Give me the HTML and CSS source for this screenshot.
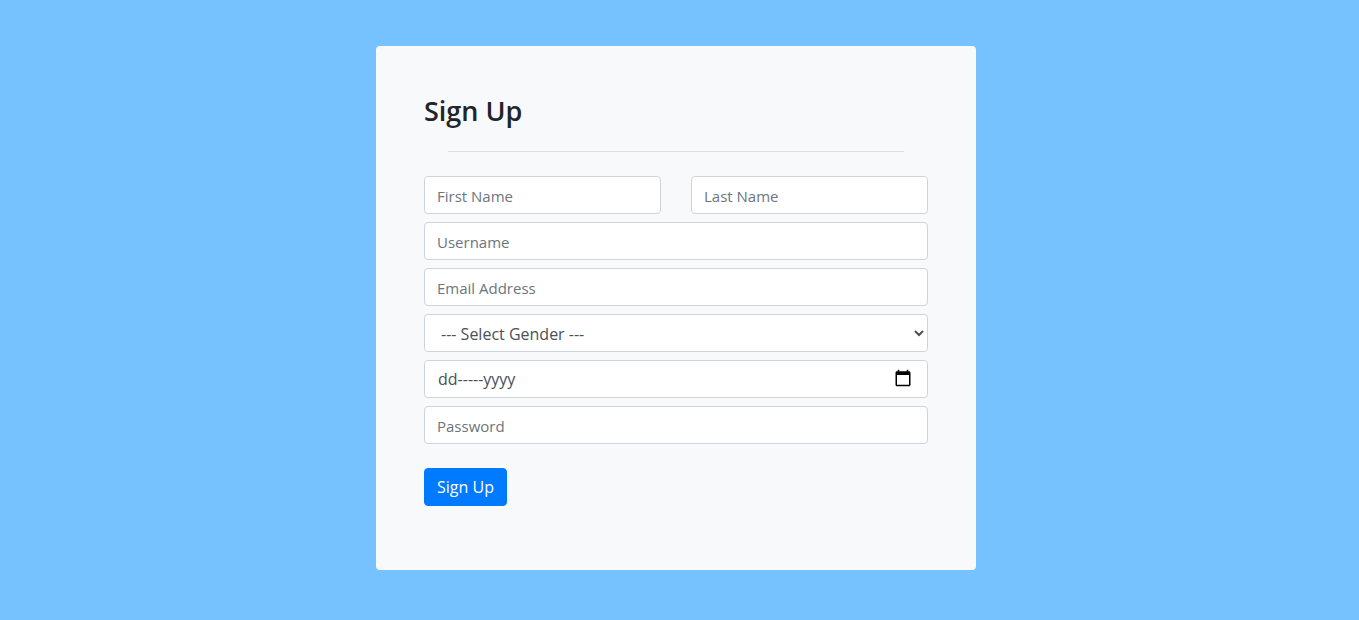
FILE: index.html
```html
<!DOCTYPE html>
<html lang="en">
<head>
<meta charset="utf-8">
<meta name="viewport" content="width=device-width, initial-scale=1">
<title>Sign Up</title>
<link rel="stylesheet" href="styles.css">
</head>
<body>
<main class="page">
  <form class="card">
    <h1 class="title">Sign Up</h1>
    <hr class="divider">
    <div class="fields">
      <div class="name-row">
        <input class="control" type="text" placeholder="First Name" aria-label="First Name">
        <input class="control" type="text" placeholder="Last Name" aria-label="Last Name">
      </div>
      <input class="control" type="text" placeholder="Username" aria-label="Username">
      <input class="control" type="email" placeholder="Email Address" aria-label="Email Address">
      <select class="control select" aria-label="Gender">
        <option>--- Select Gender ---</option>
        <option>Female</option>
        <option>Male</option>
      </select>
      <div class="control date-field">
        <input class="date-input" type="text" placeholder="dd-----yyyy" aria-label="Date of birth">
        <button class="date-button" type="button" aria-label="Open calendar">
          <svg class="date-icon" viewBox="0 0 24 24" aria-hidden="true"><path d="M20 3h-1V1h-2v2H7V1H5v2H4c-1.100 0-2 .9-2 2v16c0 1.100.9 2 2 2h16c1.100 0 2-.9 2-2V5c0-1.100-.9-2-2-2zm0 18H4V8h16v13z"/></svg>
        </button>
      </div>
      <input class="control" type="password" placeholder="Password" aria-label="Password">
    </div>
    <button class="submit" type="submit">Sign Up</button>
  </form>
</main>
</body>
</html>
```
FILE: styles.css
```css
*, *::before, *::after {
  box-sizing: border-box;
}

body {
  margin: 0;
  background: #76c1ff;
  color: #212529;
  font-family: "Segoe UI", "Open Sans", "Noto Sans", sans-serif;
  font-size: 15px;
  line-height: 24px;
}

.page {
  display: flex;
  justify-content: center;
  min-height: 100vh;
  padding: 46px 7px 50px 0;
}

.card {
  align-self: flex-start;
  width: 100%;
  max-width: 600px;
  padding: 49px 48px 64px;
  border-radius: 4px;
  background: #f8f9fb;
}

.title {
  margin: 0;
  font-size: 27px;
  font-weight: 600;
  line-height: 32px;
}

.divider {
  height: 1px;
  margin: 24px;
  border: 0;
  background: #dddfe2;
}

.fields {
  display: grid;
  gap: 8px;
}

.name-row {
  display: grid;
  grid-template-columns: 1fr 1fr;
  gap: 30px;
}

.control {
  width: 100%;
  min-width: 0;
  height: 38px;
  padding: 7px 12px 5px;
  border: 1px solid #ced4da;
  border-radius: 4px;
  background-color: #fff;
  color: #495057;
  font: inherit;
}

.control::placeholder {
  color: #6c757d;
  opacity: 1;
}

.select {
  font-size: 16px;
}

.date-field {
  display: flex;
  align-items: flex-start;
  padding: 6px 15px 6px 13px;
}

.date-input {
  flex: 1;
  min-width: 0;
  padding: 0;
  border: 0;
  background: transparent;
  color: #495057;
  font: inherit;
  font-size: 16px;
}

.date-input::placeholder {
  color: #495057;
  opacity: 1;
}

.date-button {
  display: flex;
  padding: 2px 0;
  border: 0;
  background: transparent;
  cursor: pointer;
}

.date-icon {
  width: 18px;
  height: 18px;
}

.submit {
  margin-top: 24px;
  padding: 6px 12px;
  border: 1px solid #007bff;
  border-radius: 4px;
  background: #007bff;
  color: #fff;
  font: inherit;
  font-size: 16px;
  cursor: pointer;
}
```
